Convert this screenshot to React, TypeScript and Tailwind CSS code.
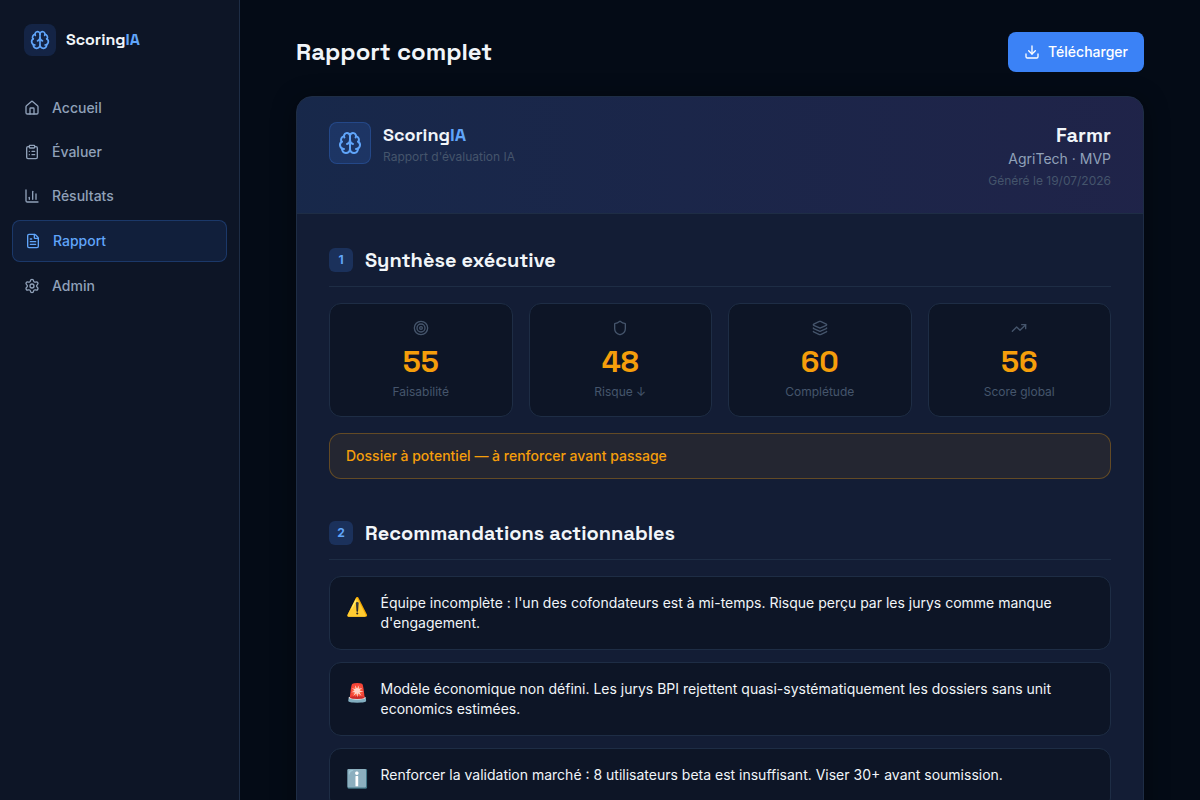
import {
  Brain,
  ChartColumn,
  ClipboardList,
  Download,
  FileText,
  House,
  Layers,
  Settings,
  Shield,
  Target,
  TrendingUp,
  type LucideIcon,
} from "lucide-react";
import type { ReactNode } from "react";

const nav: { label: string; icon: LucideIcon; active?: boolean }[] = [
  { label: "Accueil", icon: House },
  { label: "Évaluer", icon: ClipboardList },
  { label: "Résultats", icon: ChartColumn },
  { label: "Rapport", icon: FileText, active: true },
  { label: "Admin", icon: Settings },
];

const scores: { value: number; label: string; icon: LucideIcon }[] = [
  { value: 55, label: "Faisabilité", icon: Target },
  { value: 48, label: "Risque ↓", icon: Shield },
  { value: 60, label: "Complétude", icon: Layers },
  { value: 56, label: "Score global", icon: TrendingUp },
];

const advice = [
  {
    emoji: "⚠️",
    text: "Équipe incomplète : l'un des cofondateurs est à mi-temps. Risque perçu par les jurys comme manque d'engagement.",
  },
  {
    emoji: "🚨",
    text: "Modèle économique non défini. Les jurys BPI rejettent quasi-systématiquement les dossiers sans unit economics estimées.",
  },
  {
    emoji: "ℹ️",
    text: "Renforcer la validation marché : 8 utilisateurs beta est insuffisant. Viser 30+ avant soumission.",
  },
];

const display = "font-['Space_Grotesk',Inter,sans-serif]";

function Sidebar() {
  return (
    <aside className="flex h-full w-60 shrink-0 flex-col border-r border-[#1e2d45] bg-[#0d1526]">
      <div className="flex items-center gap-2.5 p-6">
        <div className="flex size-8 items-center justify-center rounded-lg bg-[#3b82f6]/15 text-[#60a5fa]">
          <Brain size={20} />
        </div>
        <span className={`${display} text-base font-semibold text-slate-100`}>
          Scoring<span className="text-[#60a5fa]">IA</span>
        </span>
      </div>
      <nav className="flex flex-col gap-1 px-3 pt-2">
        {nav.map(({ label, icon: Icon, active }) => (
          <a
            key={label}
            className={`flex items-center gap-3 rounded-lg px-3 py-2.5 text-sm font-medium ${
              active
                ? "border border-[#3b82f6]/25 bg-[#3b82f6]/10 text-[#60a5fa]"
                : "text-slate-400"
            }`}
          >
            <Icon size={16} />
            {label}
          </a>
        ))}
      </nav>
    </aside>
  );
}

function Section({ index, title, children }: { index: number; title: string; children: ReactNode }) {
  return (
    <section>
      <div className="mb-4 flex items-center gap-3 border-b border-[#1e2d45] pb-3">
        <span className="flex size-6 items-center justify-center rounded-md bg-[#3b82f6]/20 text-xs font-bold text-[#60a5fa]">
          {index}
        </span>
        <h2 className={`${display} text-xl font-semibold text-slate-100`}>{title}</h2>
      </div>
      {children}
    </section>
  );
}

export default function App() {
  return (
    <div className="flex h-screen overflow-hidden bg-[#040b16] font-['Inter',sans-serif] text-slate-100">
      <Sidebar />
      <main className="min-w-0 flex-1 overflow-hidden">
        <div className="mx-auto max-w-4xl px-6 py-8">
          <div className="mb-6 flex items-center justify-between">
            <h1 className={`${display} text-2xl font-bold`}>Rapport complet</h1>
            <button className="flex items-center gap-2 rounded-lg bg-[#3b82f6] px-4 py-2.5 text-sm font-medium text-white">
              <Download size={16} />
              Télécharger
            </button>
          </div>

          <article className="overflow-hidden rounded-2xl border border-[#1e2d45] bg-[#131d35] shadow-[0_4px_24px_rgba(0,0,0,0.4)]">
            <header className="flex items-start justify-between border-b border-[#1e2d45] bg-[linear-gradient(90deg,rgba(59,130,246,0.11),rgba(139,92,246,0.1))] px-8 py-6">
              <div className="flex items-center gap-3">
                <div className="flex size-[42px] items-center justify-center rounded-lg border border-[#3b82f6]/25 bg-[#3b82f6]/15 text-[#60a5fa]">
                  <Brain size={24} />
                </div>
                <div>
                  <p className={`${display} text-lg font-bold`}>
                    Scoring<span className="text-[#60a5fa]">IA</span>
                  </p>
                  <p className="text-xs text-slate-600">Rapport d'évaluation IA</p>
                </div>
              </div>
              <div className="text-right">
                <p className={`${display} text-xl font-semibold`}>Farmr</p>
                <p className="text-sm text-slate-400">AgriTech · MVP</p>
                <p className="mt-1 text-xs text-slate-600">Généré le 19/07/2026</p>
              </div>
            </header>

            <div className="flex flex-col gap-10 p-8">
              <Section index={1} title="Synthèse exécutive">
                <div className="grid grid-cols-4 gap-4">
                  {scores.map(({ value, label, icon: Icon }) => (
                    <div
                      key={label}
                      className="rounded-xl border border-[#1e2d45] bg-[#0d1526] p-4 text-center"
                    >
                      <Icon size={16} className="mx-auto mb-2 text-slate-600" />
                      <p className={`${display} text-3xl font-bold text-[#f59e0b]`}>{value}</p>
                      <p className="mt-1 text-xs text-slate-600">{label}</p>
                    </div>
                  ))}
                </div>
                <p className="mt-4 rounded-xl border border-[#f59e0b]/30 bg-[#f59e0b]/8 px-4 py-3 text-sm font-medium text-[#f59e0b]">
                  Dossier à potentiel — à renforcer avant passage
                </p>
              </Section>

              <Section index={2} title="Recommandations actionnables">
                <ul className="flex flex-col gap-3">
                  {advice.map(({ emoji, text }) => (
                    <li
                      key={emoji}
                      className="flex items-start gap-3 rounded-xl border border-[#1e2d45] bg-[#0d1526] p-4"
                    >
                      <span className="w-[22.5px] shrink-0 text-lg">{emoji}</span>
                      <p className="text-sm">{text}</p>
                    </li>
                  ))}
                </ul>
              </Section>
            </div>
          </article>
        </div>
      </main>
    </div>
  );
}
